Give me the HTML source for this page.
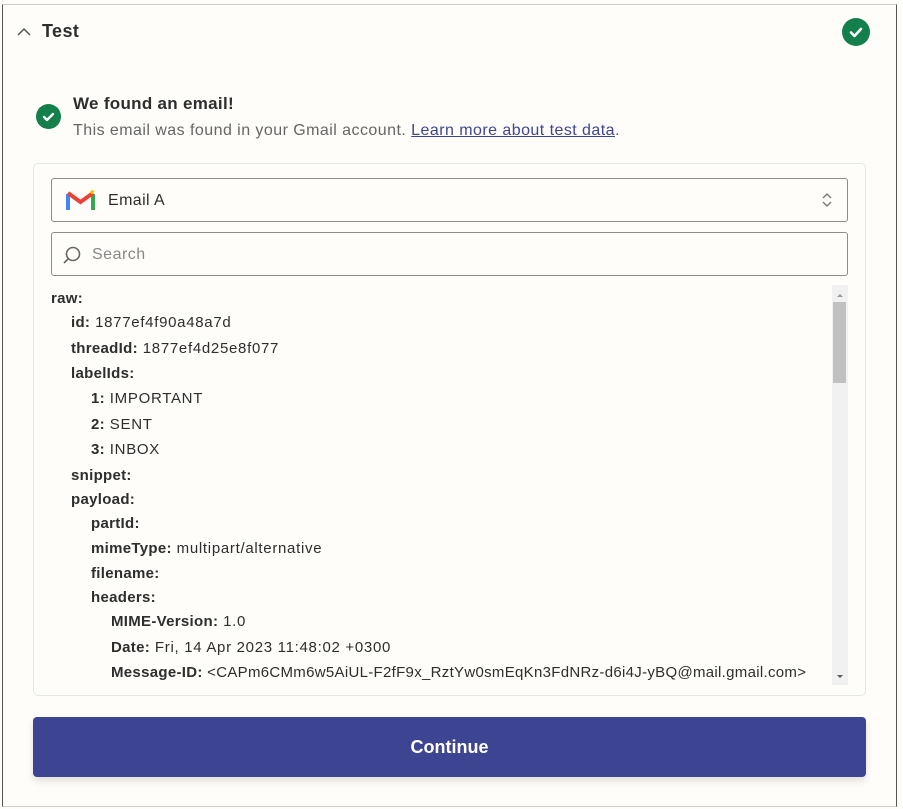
<!DOCTYPE html>
<html><head><meta charset="utf-8"><style>
*{box-sizing:border-box;margin:0;padding:0}
body{width:903px;height:809px;background:#fffdf9;font-family:"Liberation Sans",sans-serif;color:#2d2e2e;position:relative;overflow:hidden}
.panel{position:absolute;left:2px;top:4px;width:895px;height:803px;border-left:1.5px solid #555;border-right:1.5px solid #555;border-top:1px solid #ccc;border-bottom:1.5px solid #ccc;background:#fffdf9}
.abs{position:absolute}
.chk{position:absolute;border-radius:50%;background:#13804c}
.box{position:absolute;left:33px;top:163px;width:833px;height:533px;border:1px solid #e8e6e1;border-radius:5px}
.field{position:absolute;left:51px;width:797px;height:44px;border:1px solid #8d8c88;border-radius:3px}
.line{position:absolute;font-size:15px;white-space:nowrap;line-height:20px;letter-spacing:0.7px}
.line b{font-weight:bold;color:#2d2e2e;letter-spacing:0.3px}
.btn{position:absolute;left:33px;top:717px;width:833px;height:60px;background:#3d4592;border-radius:4px;color:#fff;font-weight:bold;font-size:18px;text-align:center;line-height:60px;box-shadow:0 4px 8px rgba(0,0,0,.12)}
</style></head><body>
<div class="panel"></div>
<svg class="abs" style="left:16px;top:25px" width="16" height="12"><path d="M2 10 L8 4 L14 10" stroke="#555" stroke-width="1.5" fill="none"/></svg>
<div class="abs" style="left:42px;top:21px;font-size:18px;font-weight:bold;color:#2d2e2e;letter-spacing:0.4px">Test</div>
<div class="chk" style="left:842px;top:18px;width:28px;height:28px"></div>
<svg class="abs" style="left:842px;top:18px" width="28" height="28"><path d="M9 14.5 L12.5 18 L19 11" stroke="#fff" stroke-width="2.6" fill="none" stroke-linecap="round" stroke-linejoin="round"/></svg>
<div class="chk" style="left:36px;top:104px;width:25px;height:25px"></div>
<svg class="abs" style="left:36px;top:104px" width="25" height="25"><path d="M8 13 L11 16 L17 10" stroke="#fff" stroke-width="2.4" fill="none" stroke-linecap="round" stroke-linejoin="round"/></svg>
<div class="abs" style="left:73px;top:94px;font-size:17px;font-weight:bold;letter-spacing:0.3px">We found an email!</div>
<div class="abs" style="left:73px;top:122px;font-size:16px;color:#666;letter-spacing:0.45px">This email was found in your Gmail account. <span style="color:#3d4592;text-decoration:underline">Learn more about test data</span>.</div>
<div class="box"></div>
<div class="field" style="top:178px"></div>
<svg class="abs" style="left:66px;top:189px" width="29" height="22" viewBox="0 0 29 22"><path d="M2 21V5" stroke="#4285f4" stroke-width="4"/><path d="M27 21V5" stroke="#34a853" stroke-width="4"/><path d="M2 4 L14.5 13 L27 4" stroke="#ea4335" stroke-width="4" fill="none"/><path d="M25 2 L27 4" stroke="#fbbc04" stroke-width="4"/></svg>
<div class="abs" style="left:108px;top:192px;font-size:16px;letter-spacing:0.4px">Email A</div>
<svg class="abs" style="left:820px;top:191px" width="14" height="18"><path d="M3 7 L7 3 L11 7 M3 11 L7 15 L11 11" stroke="#777" stroke-width="1.4" fill="none"/></svg>
<div class="field" style="top:232px"></div>
<svg class="abs" style="left:61px;top:244px" width="22" height="22"><circle cx="12" cy="10" r="6.5" stroke="#666" stroke-width="1.6" fill="none"/><path d="M7 15 L3 19" stroke="#666" stroke-width="1.6"/></svg>
<div class="abs" style="left:92px;top:246px;font-size:16px;color:#888;letter-spacing:0.5px">Search</div>
<div class="abs" style="left:832px;top:285px;width:16px;height:400px;background:#f1f1f1"></div>
<div class="abs" style="left:833px;top:302px;width:13px;height:81px;background:#c1c1c1"></div>
<svg class="abs" style="left:832px;top:288px" width="16" height="400"><path d="M5 9 L8 6 L11 9Z" fill="#999"/><path d="M5 387 L8 390 L11 387Z" fill="#555"/></svg>
<div style="position:absolute;left:0;top:0;width:828px;height:700px;overflow:hidden">
<div class="line" style="left:51px;top:289px"><b>raw:</b></div>
<div class="line" style="left:71px;top:313px"><b>id:</b> 1877ef4f90a48a7d</div>
<div class="line" style="left:71px;top:339px"><b>threadId:</b> 1877ef4d25e8f077</div>
<div class="line" style="left:71px;top:364px"><b>labelIds:</b></div>
<div class="line" style="left:91px;top:389px"><b>1:</b> IMPORTANT</div>
<div class="line" style="left:91px;top:415px"><b>2:</b> SENT</div>
<div class="line" style="left:91px;top:440px"><b>3:</b> INBOX</div>
<div class="line" style="left:71px;top:466px"><b>snippet:</b></div>
<div class="line" style="left:71px;top:490px"><b>payload:</b></div>
<div class="line" style="left:91px;top:514px"><b>partId:</b></div>
<div class="line" style="left:91px;top:539px"><b>mimeType:</b> multipart/alternative</div>
<div class="line" style="left:91px;top:564px"><b>filename:</b></div>
<div class="line" style="left:91px;top:588px"><b>headers:</b></div>
<div class="line" style="left:111px;top:612px"><b>MIME-Version:</b> 1.0</div>
<div class="line" style="left:111px;top:638px"><b>Date:</b> Fri, 14 Apr 2023 11:48:02 +0300</div>
<div class="line" style="left:111px;top:663px;letter-spacing:0.3px"><b>Message-ID:</b> &lt;CAPm6CMm6w5AiUL-F2fF9x_RztYw0smEqKn3FdNRz-d6i4J-yBQ@mail.gmail.com&gt;</div>
</div>
<div class="btn">Continue</div>
</body></html>
